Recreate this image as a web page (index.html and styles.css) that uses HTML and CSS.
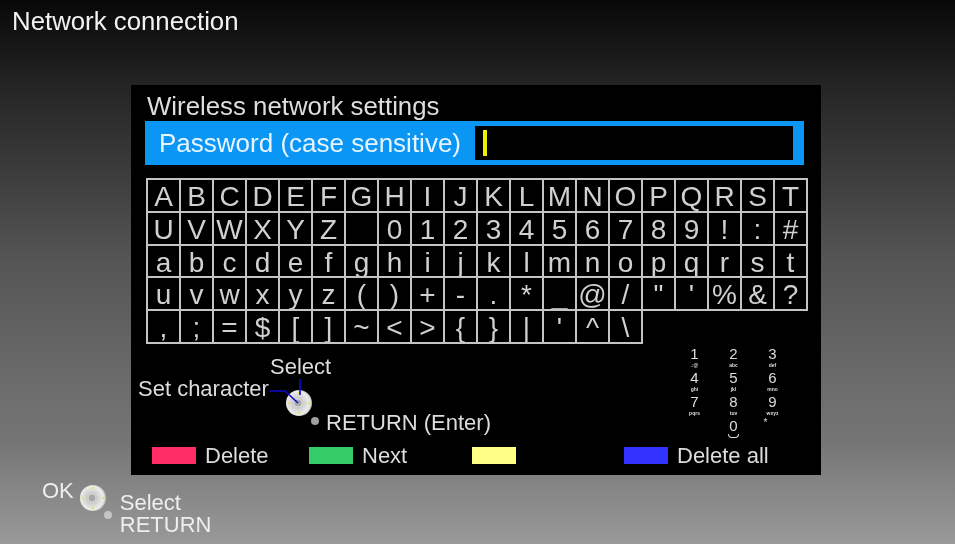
FILE: index.html
```html
<!DOCTYPE html>
<html>
<head>
<meta charset="utf-8">
<title>Network connection</title>
<link rel="stylesheet" href="styles.css">
</head>
<body>

<h1 class="screen-title">Network connection</h1>

<div class="panel">
	<h2 class="panel-title">Wireless network settings</h2>

	<div class="password-bar">
		<span class="password-label">Password (case sensitive)</span>
		<div class="password-input"><i class="caret"></i></div>
	</div>

	<div class="keys">
		<span>A</span><span>B</span><span>C</span><span>D</span><span>E</span><span>F</span><span>G</span><span>H</span><span>I</span><span>J</span><span>K</span><span>L</span><span>M</span><span>N</span><span>O</span><span>P</span><span>Q</span><span>R</span><span>S</span><span>T</span>
		<span>U</span><span>V</span><span>W</span><span>X</span><span>Y</span><span>Z</span><span></span><span>0</span><span>1</span><span>2</span><span>3</span><span>4</span><span>5</span><span>6</span><span>7</span><span>8</span><span>9</span><span>!</span><span>:</span><span>#</span>
		<span>a</span><span>b</span><span>c</span><span>d</span><span>e</span><span>f</span><span>g</span><span>h</span><span>i</span><span>j</span><span>k</span><span>l</span><span>m</span><span>n</span><span>o</span><span>p</span><span>q</span><span>r</span><span>s</span><span>t</span>
		<span>u</span><span>v</span><span>w</span><span>x</span><span>y</span><span>z</span><span>(</span><span>)</span><span>+</span><span>-</span><span>.</span><span>*</span><span>_</span><span>@</span><span>/</span><span>"</span><span>'</span><span>%</span><span>&amp;</span><span>?</span>
		<span>,</span><span>;</span><span>=</span><span>$</span><span>[</span><span>]</span><span>~</span><span>&lt;</span><span>&gt;</span><span>{</span><span>}</span><span>|</span><span>'</span><span>^</span><span>\</span>
	</div>

	<div class="help">
		<div class="remote">
			<span class="remote-select">Select</span>
			<span class="remote-set">Set character</span>
			<svg class="remote-pad" width="56" height="52" viewBox="0 0 56 52">
				<defs>
					<radialGradient id="disc" cx="0.45" cy="0.5" r="0.6">
						<stop offset="0" stop-color="#b0b0b0"/>
						<stop offset="0.35" stop-color="#cfcfcf"/>
						<stop offset="0.75" stop-color="#ededed"/>
						<stop offset="1" stop-color="#9c9c9c"/>
					</radialGradient>
				</defs>
				<circle cx="29" cy="24" r="13" fill="url(#disc)"/>
				<circle cx="28" cy="24" r="4" fill="#a8a8a8" stroke="#d8d8d8"/>
				<circle cx="29" cy="14" r="1.3" fill="#e8e070"/>
				<circle cx="29" cy="34" r="1.3" fill="#e8e070"/>
				<circle cx="19" cy="24" r="1.3" fill="#e8e070"/>
				<circle cx="39" cy="24" r="1.3" fill="#e8e070"/>
				<path d="M0 12H15L28 24M30 0V16" fill="none" stroke="#0a0ad0" stroke-width="1.6"/>
				<circle cx="45" cy="42" r="4" fill="#a0a0a0"/>
			</svg>
			<span class="remote-return">RETURN (Enter)</span>
		</div>

		<div class="numpad">
			<div><b>1</b><small>.:@</small></div>
			<div><b>2</b><small>abc</small></div>
			<div><b>3</b><small>def</small></div>
			<div><b>4</b><small>ghi</small></div>
			<div><b>5</b><small>jkl</small></div>
			<div><b>6</b><small>mno</small></div>
			<div><b>7</b><small>pqrs</small></div>
			<div><b>8</b><small>tuv</small></div>
			<div><b>9</b><small>wxyz</small></div>
			<div></div>
			<div><b>0</b><i class="numpad-space"></i></div>
			<div class="numpad-dot">*</div>
		</div>
	</div>

	<div class="legend">
		<div class="legend-item"><i class="swatch red"></i>Delete</div>
		<div class="legend-item"><i class="swatch green"></i>Next</div>
		<div class="legend-item"><i class="swatch yellow"></i></div>
		<div class="legend-item"><i class="swatch blue"></i>Delete all</div>
	</div>
</div>

<div class="footer">
	<span class="footer-ok">OK</span>
	<svg class="footer-pad" width="36" height="44" viewBox="0 0 36 44">
		<circle cx="14" cy="14" r="13" fill="url(#disc)"/>
		<circle cx="13" cy="14" r="4" fill="#a8a8a8" stroke="#d8d8d8"/>
		<circle cx="14" cy="4" r="1.3" fill="#e8e070"/>
		<circle cx="14" cy="24" r="1.3" fill="#e8e070"/>
		<circle cx="4" cy="14" r="1.3" fill="#e8e070"/>
		<circle cx="24" cy="14" r="1.3" fill="#e8e070"/>
		<circle cx="29" cy="31" r="4" fill="#c4c4c4"/>
	</svg>
	<div class="footer-text">Select<br>RETURN</div>
</div>

</body>
</html>
```

FILE: styles.css
```css
html, body {margin: 0; height: 544px; overflow: hidden;}
body {
	background: linear-gradient(#080808 0, #242424 85px, #555 260px, #767676 444px, #999 544px);
	color: #eee;
	font-family: "Liberation Sans", Arial, sans-serif;
}
.screen-title {margin: 0; padding: 8px 0 0 12px; height: 85px; box-sizing: border-box; font-size: 25.8px; line-height: 27px; font-weight: normal; color: #f2f2f2; filter: blur(0.5px);}

.panel {margin-left: 131px; width: 690px; height: 390px; box-sizing: border-box; padding: 7px 0 0 14px; background: #000; filter: blur(0.5px);}
.panel-title {margin: 0 0 0 2px; font-size: 25.8px; line-height: 28px; font-weight: normal; color: #ddd;}

.password-bar {display: flex; align-items: center; width: 659px; height: 44px; margin-top: 1px; background: #0996f5;}
.password-label {width: 330px; padding-left: 14px; box-sizing: border-box; font-size: 26px; color: #e8f4ff;}
.password-input {width: 318px; height: 34px; display: flex; align-items: center; background: #000;}
.caret {width: 3.5px; height: 26px; margin-left: 8px; background: #ee0;}

.keys {display: grid; grid-template-columns: repeat(20, 33px); grid-auto-rows: 32.8px; width: 660px; margin: 14px 0 0 2px;}
.keys span {margin: -1px; border: 2px solid #c4c4c4; font-size: 28px; line-height: 34px; text-align: center; color: #d0d0d0; overflow: hidden;}

.help {display: flex; height: 99px;}
.remote {display: grid; grid-template-columns: 132px 56px auto; grid-template-rows: 26px 26px 26px; align-self: flex-start; margin: 10px 0 0 -7px; font-size: 22px; color: #ddd;}
.remote-select {grid-column: 2 / 4; grid-row: 1; line-height: 28px;}
.remote-set {grid-column: 1; grid-row: 2; line-height: 20px; white-space: nowrap;}
.remote-pad {grid-column: 2; grid-row: 2 / 4;}
.remote-return {grid-column: 3; grid-row: 3; line-height: 36px; white-space: nowrap;}

.numpad {display: grid; grid-template-columns: repeat(3, 39px); grid-auto-rows: 24px; margin: 2px 0 0 184px; color: #ddd; text-align: center;}
.numpad div {display: flex; flex-direction: column; align-items: center;}
.numpad b {font-size: 15px; line-height: 17px; font-weight: normal;}
.numpad small {font-size: 5px; line-height: 6px; font-weight: bold;}
.numpad-space {width: 9px; height: 3px; border: 1.5px solid #ddd; border-top: 0; border-radius: 0 0 4px 4px;}
.numpad .numpad-dot {font-size: 10px; line-height: 12px; padding-right: 14px;}

.legend {display: grid; grid-template-columns: 157px 163px 152px auto; margin-left: 7px; font-size: 22px; color: #ddd;}
.legend-item {display: flex; align-items: center; gap: 9px; height: 28px;}
.swatch {width: 44px; height: 17px;}
.red {background: #ff2d63;}
.green {background: #33cc66;}
.yellow {background: #ffff88;}
.blue {background: #3333ff;}

.footer {display: flex; padding: 0 0 0 42px; font-size: 22px; color: #eee; filter: blur(0.5px);}
.footer-ok {padding-top: 4px; line-height: 24px;}
.footer-pad {margin: 9px 0 0 5px;}
.footer-text {margin: 17px 0 0 5px; line-height: 22px;}
```
